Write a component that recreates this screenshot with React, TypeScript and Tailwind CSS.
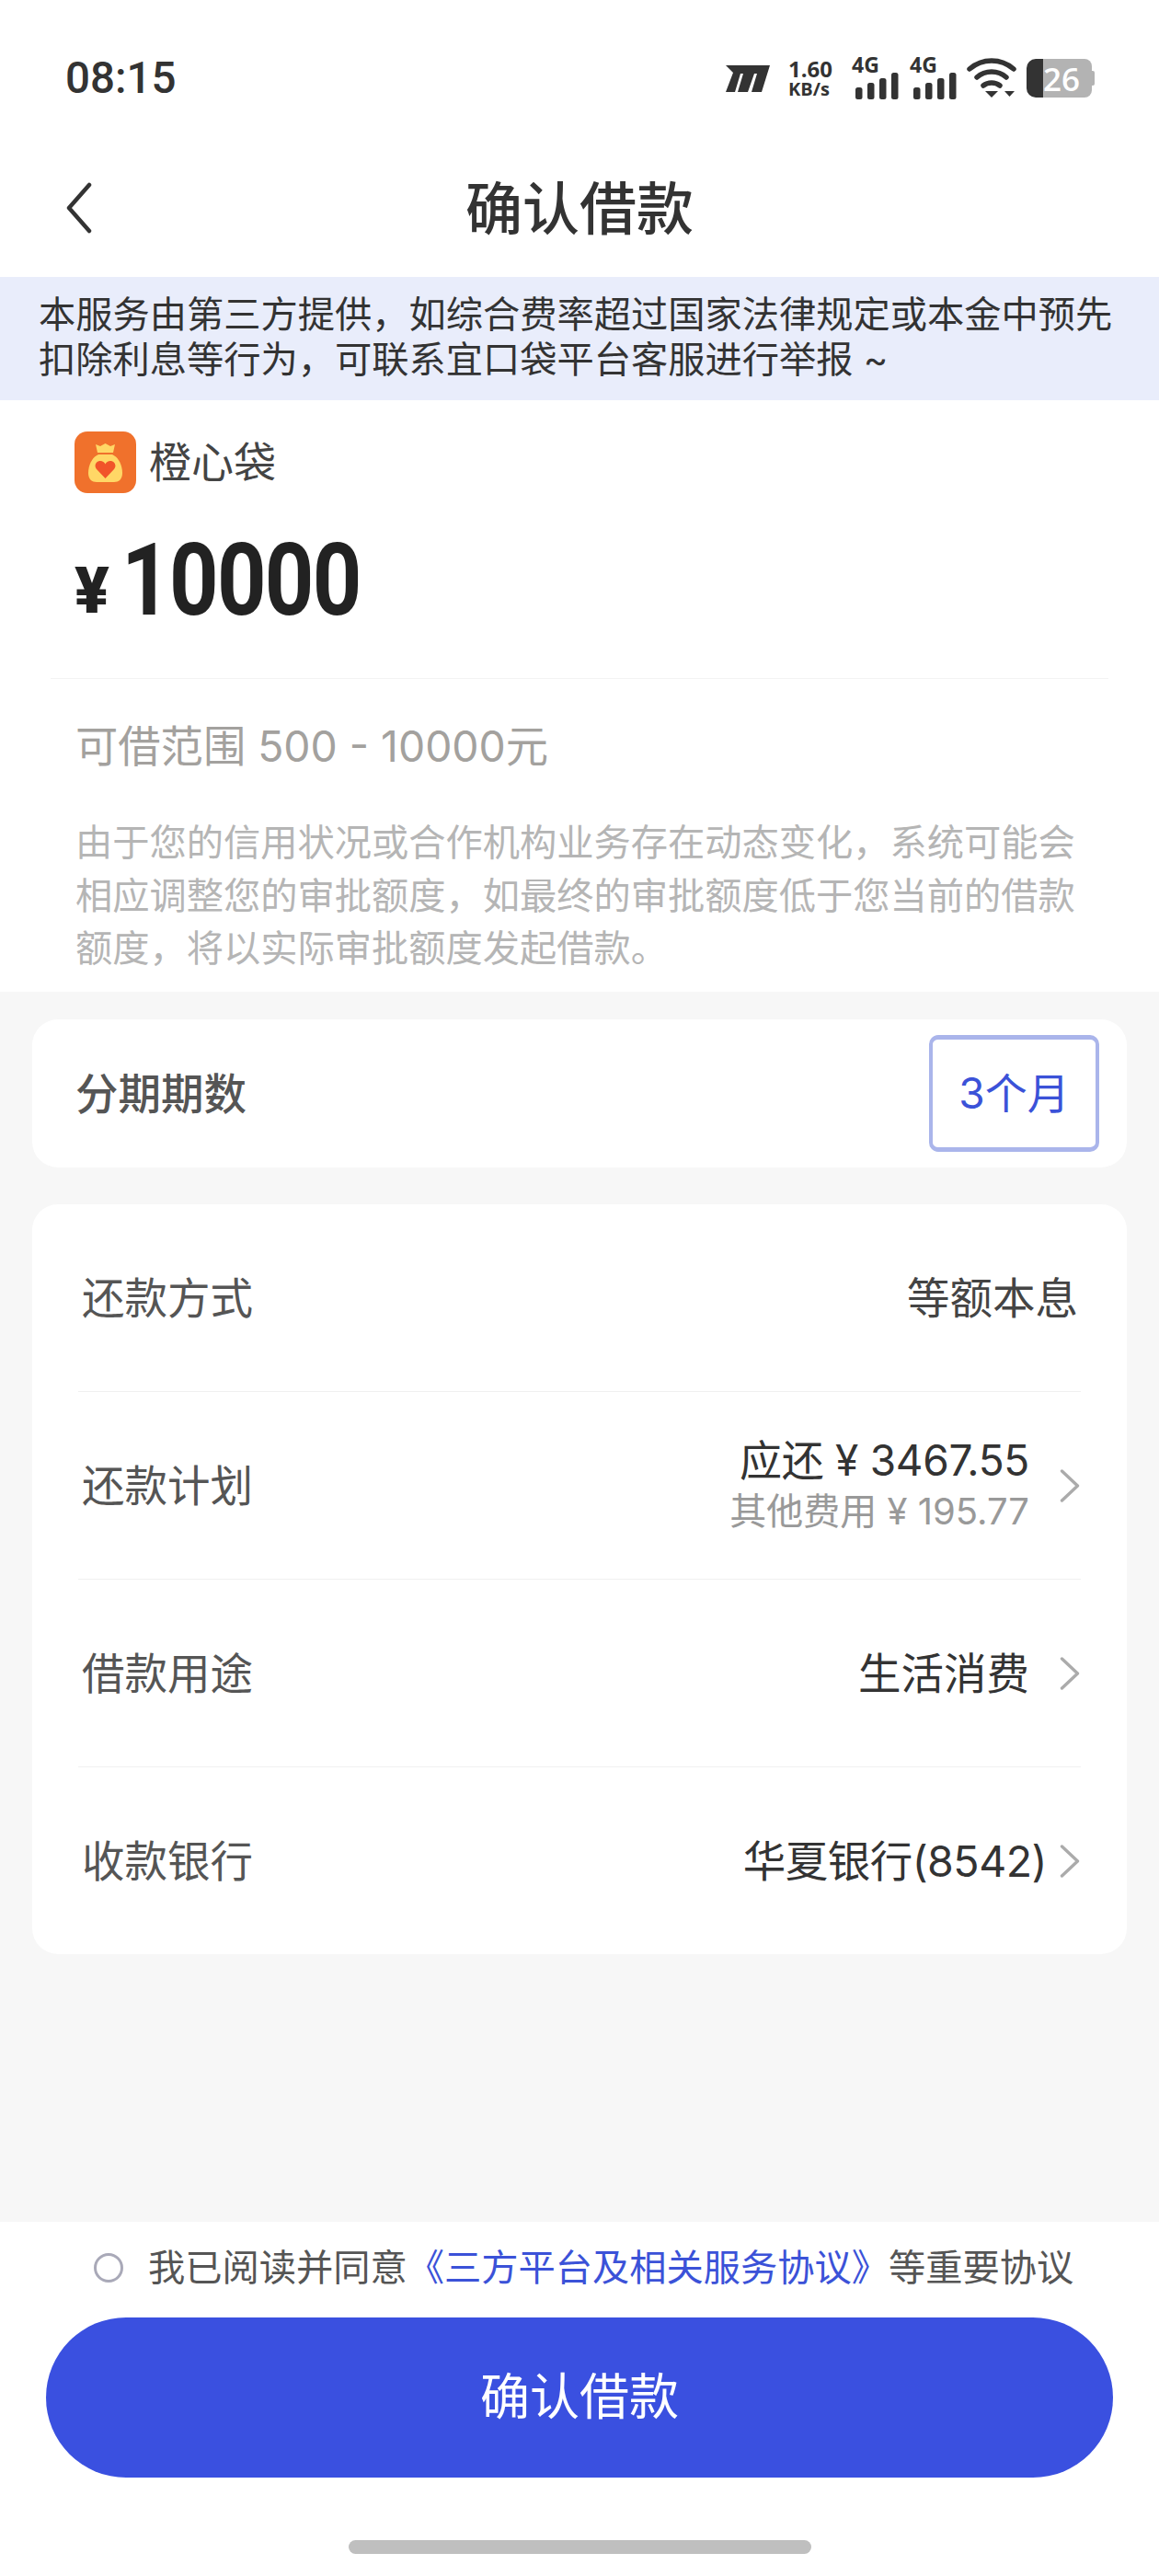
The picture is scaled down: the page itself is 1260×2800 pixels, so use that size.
const font = '[font-family:Inter,"Noto_Sans_CJK_SC",sans-serif]';

function Chevron({ className = "" }: { className?: string }) {
  return (
    <svg width="22" height="36" viewBox="0 0 22 36" fill="none" className={className}>
      <path d="M2.5 2 L19.5 18 L2.5 34" stroke="#ababab" strokeWidth="3.4" strokeLinecap="round" strokeLinejoin="round" />
    </svg>
  );
}

function Signal() {
  return (
    <div className="relative w-[49px] h-[44px]">
      <span className="absolute left-[-2px] top-[-5px] text-[23px] leading-[24px] font-bold text-[#333] [font-family:'Open_Sans',sans-serif]">4G</span>
      <svg width="49" height="30" viewBox="0 0 49 30" className="absolute left-0 bottom-[-2px]">
        <rect x="2" y="16" width="7.5" height="13" rx="2.5" fill="#333" />
        <rect x="15" y="11" width="7.5" height="18" rx="2.5" fill="#333" />
        <rect x="28" y="6" width="7.5" height="23" rx="2.5" fill="#333" />
        <rect x="41" y="0" width="7.5" height="29" rx="2.5" fill="#333" />
      </svg>
    </div>
  );
}

function StatusIcons() {
  return (
    <div className="flex items-center">
      <svg width="48" height="29" viewBox="0 0 48 29" className="mr-[20px]">
        <path d="M0 0 H48 L39 29 H28 L34 9 H31 L24 29 H13 L19 9 H16 L10 29 H0 L8 8 Z" fill="#333" />
      </svg>
      <div className="w-[52px] mr-[19px] flex flex-col items-start text-[#333] font-bold [font-family:'Open_Sans',sans-serif]">
        <span className="text-[24px] leading-[24px]">1.60</span>
        <span className="text-[20px] leading-[20px] whitespace-nowrap">KB/s</span>
      </div>
      <Signal />
      <div className="w-[14px]" />
      <Signal />
      <svg width="54" height="44" viewBox="0 0 54 44" className="ml-[11px]">
        <path d="M3 12 C17 0 37 0 51 12" stroke="#333" strokeWidth="5.5" fill="none" strokeLinecap="round" />
        <path d="M11 21 C20 13 34 13 43 21" stroke="#333" strokeWidth="5.5" fill="none" strokeLinecap="round" />
        <path d="M18 30 C23 26 31 26 36 30" stroke="#333" strokeWidth="5.5" fill="none" strokeLinecap="round" />
        <path d="M20 36 H34 L27 43 Z" fill="#333" />
        <path d="M41 36 H52 L46.5 42 Z" fill="#333" />
      </svg>
      <div className="ml-[11px] w-[74px] h-[42px] flex relative">
        <div className="w-[18px] h-full bg-[#333] rounded-l-[10px]" />
        <div className="w-[53px] h-full bg-[#b3b3b3] rounded-r-[8px]" />
        <div className="w-[3px] h-[16px] my-auto bg-[#b3b3b3] rounded-r-[2px]" />
        <span className="absolute left-[18px] top-0 h-full flex items-center text-white text-[35px] font-semibold leading-none [font-family:'Open_Sans',sans-serif]">26</span>
      </div>
    </div>
  );
}

function Row({ label, children, last }: { label: string; children: React.ReactNode; last?: boolean }) {
  return (
    <div className={`mx-[50px] h-[204px] pl-[4px] pr-[1px] flex items-center justify-between ${last ? "" : "border-b border-[#f0f0f0]"}`}>
      <span className="text-[46.5px] leading-[60px] text-[#555]">{label}</span>
      {children}
    </div>
  );
}

export default function App() {
  return (
    <div className={`w-[1260px] h-[2800px] flex flex-col bg-white ${font}`}>
      <div className="h-[150px] pt-[20px] pl-[71px] pr-[70px] flex items-center justify-between">
        <span className="pt-[2px] text-[47.5px] font-medium text-[#333] leading-none [font-family:Roboto,sans-serif]">08:15</span>
        <StatusIcons />
      </div>

      <div className="h-[151px] pt-[4px] relative flex items-center justify-center">
        <svg width="30" height="56" viewBox="0 0 30 56" fill="none" className="absolute left-[71px] top-[48px]">
          <path d="M26 3 L4 28 L26 53" stroke="#333" strokeWidth="4.5" strokeLinecap="round" strokeLinejoin="round" />
        </svg>
        <span className="text-[62px] font-medium text-[#333] leading-none">确认借款</span>
      </div>

      <div className="h-[134px] bg-[#e9edfb] px-[42px] pt-[16px] text-[40.25px] leading-[49px] text-[#333]">
        本服务由第三方提供，如综合费率超过国家法律规定或本金中预先扣除利息等行为，可联系宜口袋平台客服进行举报 ~
      </div>

      <div className="h-[643px] bg-white">
        <div className="pt-[34px] pl-[81px] flex items-center">
          <div className="w-[67px] h-[67px] rounded-[14px] bg-[#f0712c] flex items-center justify-center">
            <svg width="37" height="42" viewBox="0 0 37 42">
              <path d="M8 1 L13 3 L18.5 0 L24 3 L29 1 L27 10 H10 Z" fill="#ffd766" />
              <path d="M11 12 H26 C33 15 37 24 37 32 C37 39 33 42 28 42 H9 C4 42 0 39 0 32 C0 24 4 15 11 12 Z" fill="#ffd766" />
              <path d="M18.5 38 L9 28 C5.5 23.5 9 19 13 19 C15.5 19 17.5 20.5 18.5 22.5 C19.5 20.5 21.5 19 24 19 C28 19 31.5 23.5 28 28 Z" fill="#f1542a" />
            </svg>
          </div>
          <span className="ml-[14px] text-[46px] leading-[67px] text-[#444]">橙心袋</span>
        </div>

        <div className="pl-[81px] h-[135px] flex items-end text-[#222]">
          <span className="text-[70px] font-black leading-[78px] w-[51px] mb-[-10px] [font-family:Roboto,sans-serif]">¥</span>
          <span className="text-[110px] font-bold leading-[100px] tracking-[-2px] mb-[-10px] origin-left scale-x-[0.85] [font-family:Roboto,sans-serif]">10000</span>
        </div>

        <div className="mx-[55px] mt-[66px] border-t border-[#f3f3f3]" />

        <div className="pl-[82px] mt-[43px] text-[46.3px] leading-[60px] text-[#a3a19e]">可借范围 500 - 10000元</div>

        <div className="px-[82px] mt-[46px] text-[40.25px] leading-[57.5px] text-[#b5b5b5]">
          由于您的信用状况或合作机构业务存在动态变化，系统可能会相应调整您的审批额度，如最终的审批额度低于您当前的借款额度，将以实际审批额度发起借款。
        </div>
      </div>

      <div className="flex-1 bg-[#f7f7f7] px-[35px] pt-[30px]">
        <div className="h-[161px] bg-white rounded-[28px] flex items-center justify-between pl-[47px] pr-[30px]">
          <span className="text-[46.5px] font-medium text-[#555] leading-[60px]">分期期数</span>
          <div className="w-[185px] h-[127px] rounded-[10px] border-x-[4px] border-y-[5px] border-[#aab5eb] flex items-center justify-center text-[46px] text-[#3b52d8]">
            3个月
          </div>
        </div>

        <div className="mt-[40px] h-[815px] bg-white rounded-[28px]">
          <Row label="还款方式">
            <span className="mr-[2px] text-[46.5px] leading-[60px] text-[#444]">等额本息</span>
          </Row>
          <Row label="还款计划">
            <div className="flex items-center">
              <div className="flex flex-col items-end">
                <span className="text-[46px] leading-[56px] tracking-[-0.3px] text-[#333]">应还 ¥ 3467.55</span>
                <span className="text-[40px] leading-[56px] text-[#999]">其他费用 ¥ 195.77</span>
              </div>
              <Chevron className="ml-[33px]" />
            </div>
          </Row>
          <Row label="借款用途">
            <div className="flex items-center">
              <span className="text-[46.5px] leading-[60px] text-[#333]">生活消费</span>
              <Chevron className="ml-[33px]" />
            </div>
          </Row>
          <Row label="收款银行" last>
            <div className="flex items-center">
              <span className="text-[46.5px] leading-[60px] tracking-[-0.5px] text-[#333]">华夏银行(8542)</span>
              <Chevron className="ml-[14px]" />
            </div>
          </Row>
        </div>
      </div>

      <div className="h-[385px] bg-white flex flex-col items-center">
        <div className="w-[1260px] h-[100px] pl-[102px] flex items-center text-[40.25px] leading-[56px] text-[#555]">
          <div className="w-[32px] h-[32px] rounded-full border-[3px] border-[#a9a9b8] mr-[27px]" />
          <span>我已阅读并同意</span>
          <span className="text-[#3b52d8]">《三方平台及相关服务协议》</span>
          <span>等重要协议</span>
        </div>
        <div className="mt-[4px] w-[1160px] h-[174px] rounded-full bg-[#3a50e0] flex items-center justify-center text-white text-[54px] leading-none">
          确认借款
        </div>
        <div className="mt-[68px] w-[503px] h-[15px] rounded-full bg-[#bfbfbf]" />
      </div>
    </div>
  );
}
